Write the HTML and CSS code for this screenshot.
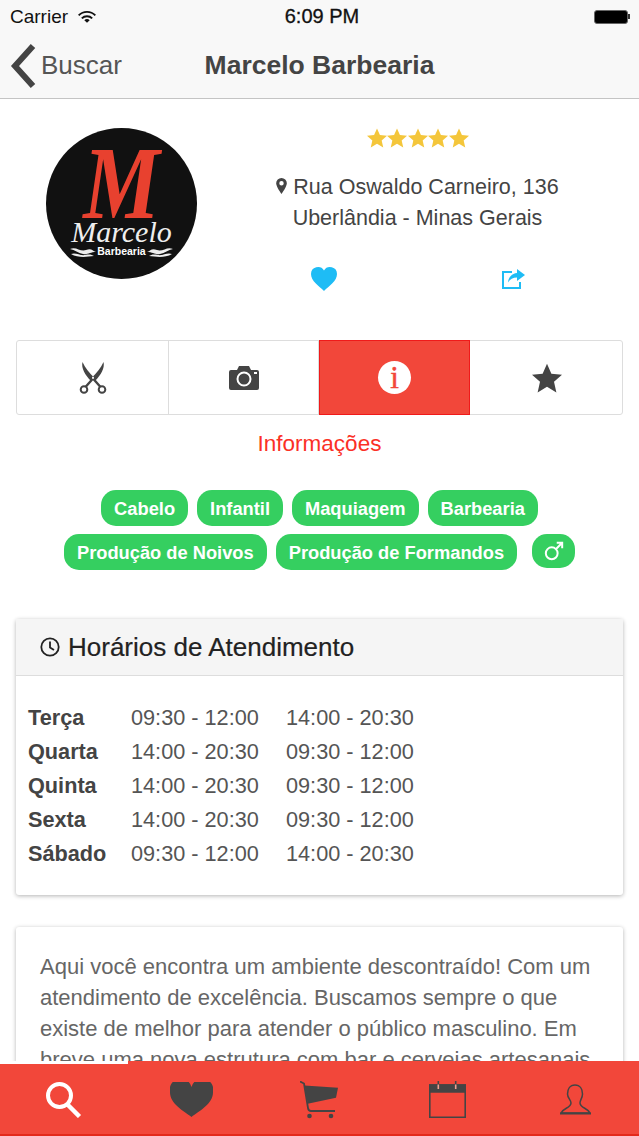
FILE: index.html
```html
<!DOCTYPE html>
<html lang="en">
  <head>
    <meta charset="UTF-8" />
    <meta name="viewport" content="width=device-width, initial-scale=1.0" />
    <title>Marcelo Barbearia</title>
    <link rel="stylesheet" href="styles.css">
  </head>
  <body>
    <div class="screen">
      <div class="top-bar">
        <div class="status-bar">
          <div class="status-left">
            <span>Carrier</span>
            <svg class="wifi" viewBox="0 0 20 14" width="18" height="13">
              <path d="M0 5a14 14 0 0 1 20 0l-1.500 1.500a12 12 0 0 0-17 0z" fill="#111"/>
              <path d="M3.500 8.300a9 9 0 0 1 13 0l-1.500 1.500a7 7 0 0 0-10 0z" fill="#111"/>
              <path d="M7 11.200a4.200 4.200 0 0 1 6 0L10 14z" fill="#111"/>
            </svg>
          </div>
          <div class="status-time">6:09 PM</div>
          <div class="status-right">
            <div class="battery"></div>
            <div class="battery-tip"></div>
          </div>
        </div>
        <div class="nav-bar">
          <div class="nav-back">
            <svg viewBox="0 0 26 44" width="26" height="44">
              <path d="M23 2 L5 22 L23 42" fill="none" stroke="#444" stroke-width="6"/>
            </svg>
            <span>Buscar</span>
          </div>
          <div class="nav-title">Marcelo Barbearia</div>
        </div>
      </div>

      <div class="hero">
        <div class="logo">
          <span class="logo-m">M</span>
          <span class="logo-name">Marcelo</span>
          <div class="logo-sub">
            <svg viewBox="0 0 26 10" width="26" height="10">
              <path d="M0 2c6-3 10 3 16 1s6 1 10 2c-6 0-8 3-13 2S5 3 0 2zM1 7c5-2 9 2 14 1s7 0 9 1c-8 1-16 2-23-2z" fill="#eee"/>
            </svg>
            <span>Barbearia</span>
            <svg class="flip" viewBox="0 0 26 10" width="26" height="10">
              <path d="M0 2c6-3 10 3 16 1s6 1 10 2c-6 0-8 3-13 2S5 3 0 2zM1 7c5-2 9 2 14 1s7 0 9 1c-8 1-16 2-23-2z" fill="#eee"/>
            </svg>
          </div>
        </div>
        <div class="hero-info">
          <div class="stars">
            <svg viewBox="0 0 24 24" width="20" height="20"><use href="#star"/></svg>
            <svg viewBox="0 0 24 24" width="20" height="20"><use href="#star"/></svg>
            <svg viewBox="0 0 24 24" width="20" height="20"><use href="#star"/></svg>
            <svg viewBox="0 0 24 24" width="20" height="20"><use href="#star"/></svg>
            <svg viewBox="0 0 24 24" width="20" height="20"><use href="#star"/></svg>
          </div>
          <div class="address">
            <div>
              <svg viewBox="0 0 12 18" width="11" height="16">
                <path fill-rule="evenodd" d="M6 0a6 6 0 0 1 6 6c0 3-3.500 8.500-6 12C3.500 14.500 0 9 0 6a6 6 0 0 1 6-6zm0 3.500a2.500 2.500 0 1 0 0 5 2.500 2.500 0 0 0 0-5z" fill="#444"/>
              </svg>
              Rua Oswaldo Carneiro, 136
            </div>
            <div>Uberlândia - Minas Gerais</div>
          </div>
          <div class="hero-actions">
            <svg viewBox="0 0 26 24" width="26" height="24">
              <path d="M13 24C8 19 0 14 0 7a7 7 0 0 1 13-3.500A7 7 0 0 1 26 7c0 7-8 12-13 17z" fill="#1ebcf5"/>
            </svg>
            <svg viewBox="0 0 24 20" width="24" height="20">
              <path d="M11 3H2v16h17v-6" fill="none" stroke="#1ebcf5" stroke-width="2"/>
              <path d="M16 0l8 6-8 6V8.500c-4 0-7 1.500-9 5 .500-5.500 4-9 9-9.500z" fill="#1ebcf5"/>
            </svg>
          </div>
        </div>
      </div>

      <div class="tabs">
        <div class="tab">
          <svg viewBox="0 0 28 32" width="28" height="32">
            <path d="M3.500 0C2 6 6 13 12 19l3-3.500C10.500 11 6 6 3.500 0zM24.500 0C26 6 22 13 16 19l-3-3.500C17.500 11 22 6 24.500 0z" fill="#444"/>
            <path d="M14 16.500L6.500 25M14 16.500L21.500 25" stroke="#444" stroke-width="2.400"/>
            <circle cx="5" cy="27.500" r="3.300" fill="none" stroke="#444" stroke-width="2"/>
            <circle cx="23" cy="27.500" r="3.300" fill="none" stroke="#444" stroke-width="2"/>
            <circle cx="14" cy="16" r="0.900" fill="#fff"/>
          </svg>
        </div>
        <div class="tab">
          <svg viewBox="0 0 30 24" width="30" height="24">
            <path fill-rule="evenodd" d="M2 4h6l2-4h10l2 4h6a2 2 0 0 1 2 2v16a2 2 0 0 1-2 2H2a2 2 0 0 1-2-2V6a2 2 0 0 1 2-2zm13 1.500a7.500 7.500 0 1 0 0 15 7.500 7.500 0 0 0 0-15zm0 2a5.500 5.500 0 1 1 0 11 5.500 5.500 0 0 1 0-11z" fill="#444"/>
            <rect x="25" y="6" width="3" height="2" fill="#fff"/>
          </svg>
        </div>
        <div class="tab tab-active">
          <div class="info-dot">i</div>
        </div>
        <div class="tab tab-last">
          <svg viewBox="0 0 24 24" width="30" height="30"><path d="M12 0.500l3.500 8 8.500.800-6.400 5.700 1.900 8.500L12 19l-7.500 4.500 1.900-8.500L0 9.300l8.500-.800z" fill="#444"/></svg>
        </div>
      </div>

      <div class="section-title">Informações</div>

      <div class="tags">
        <div class="tag-row">
          <span class="tag">Cabelo</span>
          <span class="tag">Infantil</span>
          <span class="tag">Maquiagem</span>
          <span class="tag">Barbearia</span>
        </div>
        <div class="tag-row">
          <span class="tag">Produção de Noivos</span>
          <span class="tag">Produção de Formandos</span>
          <span class="tag tag-icon">
            <svg viewBox="0 0 22 22" width="20" height="20">
              <circle cx="8.500" cy="13.500" r="6.500" fill="none" stroke="#fff" stroke-width="2.200"/>
              <path d="M13 9l7-7M14 2h6v6" fill="none" stroke="#fff" stroke-width="2.200"/>
            </svg>
          </span>
        </div>
      </div>

      <div class="card hours">
        <div class="card-header">
          <svg viewBox="0 0 20 20" width="20" height="20">
            <circle cx="10" cy="10" r="8.700" fill="none" stroke="#222" stroke-width="1.800"/>
            <path d="M10 4.500V10.500L14 13" fill="none" stroke="#222" stroke-width="1.800"/>
          </svg>
          <span>Horários de Atendimento</span>
        </div>
        <div class="hours-table">
          <div class="day">Terça</div><div>09:30 - 12:00</div><div>14:00 - 20:30</div>
          <div class="day">Quarta</div><div>14:00 - 20:30</div><div>09:30 - 12:00</div>
          <div class="day">Quinta</div><div>14:00 - 20:30</div><div>09:30 - 12:00</div>
          <div class="day">Sexta</div><div>14:00 - 20:30</div><div>09:30 - 12:00</div>
          <div class="day">Sábado</div><div>09:30 - 12:00</div><div>14:00 - 20:30</div>
        </div>
      </div>

      <div class="card about">
        Aqui você encontra um ambiente descontraído! Com um
        atendimento de excelência. Buscamos sempre o que
        existe de melhor para atender o público masculino. Em
        breve uma nova estrutura com bar e cervejas artesanais.
      </div>

      <div class="tab-bar">
        <div class="tab-bar-item tab-bar-current">
          <svg viewBox="0 0 36 36" width="36" height="36">
            <circle cx="13.500" cy="13.500" r="11.500" fill="none" stroke="#fff" stroke-width="4"/>
            <path d="M21.500 22.500L33.500 34.500" stroke="#fff" stroke-width="4.500"/>
          </svg>
        </div>
        <div class="tab-bar-item">
          <svg viewBox="0 0 43 35" width="43" height="35">
            <path d="M21.500 35C14 29 0 22 0 10.500A10.500 10.500 0 0 1 21.500 5 10.500 10.500 0 0 1 43 10.500C43 22 29 29 21.500 35z" fill="#444"/>
          </svg>
        </div>
        <div class="tab-bar-item">
          <svg viewBox="0 0 38 38" width="38" height="38">
            <path d="M0 .500L4 2.500 8 27q.500 3 3 3h24" fill="none" stroke="#444" stroke-width="1.800"/>
            <path d="M4.500 4.500L38 6.700 36 16.700 7.700 22.700z" fill="#444"/>
            <circle cx="9.500" cy="35" r="2.300" fill="#444"/>
            <circle cx="31" cy="35" r="2.300" fill="#444"/>
          </svg>
        </div>
        <div class="tab-bar-item">
          <svg viewBox="0 0 37 37" width="37" height="37">
            <path d="M0 3.300h37v8.400H0z" fill="#444"/>
            <path d="M.800 4h35.400v32.200H.800z" fill="none" stroke="#444" stroke-width="1.600"/>
            <path d="M9.300 0v3.500M26.700 0v3.500" stroke="#444" stroke-width="1.600"/>
            <path d="M9.300 3.500v4.500M26.700 3.500v4.500" stroke="#f0a090" stroke-width="1.600"/>
          </svg>
        </div>
        <div class="tab-bar-item">
          <svg viewBox="0 0 31 31" width="31" height="31">
            <path d="M15 1C20 1 22.500 5 22.500 10 22.500 14 20 16 20 19 20 24 28 24 30 29H1C3 24 11 24 11 19 11 16 7.500 14 7.500 10 7.500 5 10 1 15 1z" fill="none" stroke="#444" stroke-width="1.500"/>
            <path d="M0 29.500h31" stroke="#444" stroke-width="2"/>
          </svg>
        </div>
      </div>
    </div>

    <svg class="defs" width="0" height="0">
      <symbol id="star" viewBox="0 0 24 24">
        <path d="M12 0.500l3.500 8 8.500.800-6.400 5.700 1.900 8.500L12 19l-7.500 4.500 1.900-8.500L0 9.300l8.500-.800z" fill="#f4c63b"/>
      </symbol>
    </svg>
  </body>
</html>
```

FILE: styles.css
```css
* {
  margin: 0;
  padding: 0;
  box-sizing: border-box;
}

body {
  font-family: "Liberation Sans", Arial, sans-serif;
  background: #ffffff;
  color: #444444;
  width: 639px;
  height: 1136px;
  overflow: hidden;
}

.screen {
  position: relative;
  width: 639px;
  height: 1136px;
  overflow: hidden;
}

.defs {
  position: absolute;
}

/* Top bars */
.top-bar {
  height: 99px;
  background: #f8f8f8;
  border-bottom: 1px solid #c4c4c4;
}

.status-bar {
  height: 33px;
  display: flex;
  align-items: center;
  justify-content: space-between;
  padding: 0 9px 0 10px;
  font-size: 19px;
  color: #111111;
}

.status-left {
  width: 120px;
  display: flex;
  align-items: center;
  gap: 10px;
}

.status-time {
  margin-left: 4px;
  font-size: 20px;
  -webkit-text-stroke: 0.3px #111111;
}

.status-right {
  width: 120px;
  display: flex;
  align-items: center;
  justify-content: flex-end;
}

.battery {
  width: 34px;
  height: 14px;
  background: #000000;
  border: 1px solid #666666;
  border-radius: 3px;
}

.battery-tip {
  width: 2px;
  height: 5px;
  background: #333333;
}

.nav-bar {
  height: 65px;
  position: relative;
  display: flex;
  align-items: center;
  justify-content: center;
}

.nav-back {
  position: absolute;
  left: 10px;
  top: 0;
  height: 100%;
  display: flex;
  align-items: center;
  gap: 5px;
  font-size: 26px;
  color: #555555;
}

.nav-title {
  font-size: 26.5px;
  font-weight: 700;
  color: #444444;
}

/* Logo and address */
.hero {
  height: 241px;
  padding: 29px 0 0 46px;
  display: flex;
}

.logo {
  position: relative;
  flex: none;
  width: 151px;
  height: 151px;
  border-radius: 50%;
  background: #111111;
  color: #ffffff;
  text-align: center;
  font-family: "Liberation Serif", serif;
}

.logo-m {
  position: absolute;
  left: 0;
  right: 0;
  top: 22px;
  height: 66px;
  font-size: 86px;
  font-weight: 700;
  font-style: italic;
  line-height: 66px;
  color: #e8412f;
  transform: scaleY(1.2);
}

.logo-name {
  position: absolute;
  left: 0;
  right: 0;
  top: 91px;
  height: 25px;
  font-size: 30px;
  font-style: italic;
  line-height: 25px;
  color: #eeeeee;
}

.logo-sub {
  position: absolute;
  left: 0;
  right: 0;
  top: 118px;
  height: 11px;
  display: flex;
  align-items: center;
  justify-content: center;
  gap: 1px;
  font-family: "Liberation Sans", sans-serif;
  font-size: 10.5px;
  font-weight: 700;
  line-height: 11px;
}

.flip {
  transform: scaleX(-1);
}

.hero-info {
  width: 315px;
  margin-left: 63px;
  text-align: center;
}

.stars {
  height: 20px;
  display: flex;
  justify-content: center;
  gap: 0.5px;
  margin-bottom: 24px;
}

.address {
  font-size: 21.5px;
  line-height: 31px;
  color: #444444;
}

.hero-actions {
  display: flex;
  align-items: center;
  justify-content: space-between;
  padding: 0 50px 0 51px;
  margin-top: 33px;
}

/* Segmented tabs */
.tabs {
  margin: 0 16px;
  height: 75px;
  display: grid;
  grid-template-columns: 152px 150px 151px 1fr;
  border: 1px solid #dddddd;
  border-radius: 3px;
}

.tab {
  display: flex;
  align-items: center;
  justify-content: center;
  border-right: 1px solid #dddddd;
}

.tab-last {
  padding-left: 2px;
  border-right: none;
}

.tab-active {
  margin: -1px 0;
  background: #f2473a;
  box-shadow: inset 0 0 0 1px #f01a1a;
  border-right: none;
}

.info-dot {
  width: 33px;
  height: 33px;
  border-radius: 50%;
  background: #ffffff;
  color: #f2473a;
  text-align: center;
  font-family: "Liberation Serif", serif;
  font-size: 31px;
  -webkit-text-stroke: 0.5px #f2473a;
  line-height: 33px;
}

.section-title {
  margin-top: 16px;
  text-align: center;
  font-size: 22.5px;
  line-height: 26px;
  color: #fb3026;
}

/* Service tags */
.tags {
  margin-top: 33px;
  display: flex;
  flex-direction: column;
  gap: 8px;
}

.tag-row {
  display: flex;
  justify-content: center;
  gap: 9px;
}

.tag {
  height: 36px;
  padding: 0 13px;
  border-radius: 15px;
  background: #35cf60;
  color: #ffffff;
  font-size: 18.3px;
  font-weight: 700;
  line-height: 37px;
}

.tag-icon {
  margin-left: 6px;
  width: 43px;
  height: 34px;
  padding: 0;
  display: flex;
  align-items: center;
  justify-content: center;
}

/* Cards */
.card {
  margin: 0 16px;
  background: #ffffff;
  border-radius: 3px;
  box-shadow: 0 1px 4px rgba(0, 0, 0, 0.3);
}

.hours {
  margin-top: 49px;
  height: 276px;
}

.card-header {
  height: 57px;
  padding-left: 24px;
  display: flex;
  align-items: center;
  gap: 8px;
  background: #f5f5f5;
  border-bottom: 1px solid #dddddd;
  font-size: 26px;
  -webkit-text-stroke: 0.2px #222222;
  color: #222222;
}

.hours-table {
  padding: 25px 0 0 12px;
  display: grid;
  grid-template-columns: 103px 155px auto;
  grid-auto-rows: 34px;
  align-items: center;
  font-size: 21.7px;
  color: #555555;
}

.day {
  font-weight: 700;
  color: #444444;
}

.about {
  margin-top: 32px;
  height: 170px;
  padding: 24px 24px 0;
  font-size: 22px;
  line-height: 31px;
  color: #666666;
}

/* Bottom tab bar */
.tab-bar {
  position: absolute;
  left: 0;
  right: 0;
  bottom: 0;
  height: 75px;
  padding-top: 4px;
  display: flex;
  background: #f2473a;
  border-bottom: 2px solid #e3291b;
}

.tab-bar-item {
  flex: 1;
  display: flex;
  align-items: center;
  justify-content: center;
}

/* the selected item has a pale strip along its top edge */
.tab-bar-current::before {
  content: "";
  position: absolute;
  left: 0;
  top: 0;
  width: 128px;
  height: 3px;
  background: #ffffff;
}
```
